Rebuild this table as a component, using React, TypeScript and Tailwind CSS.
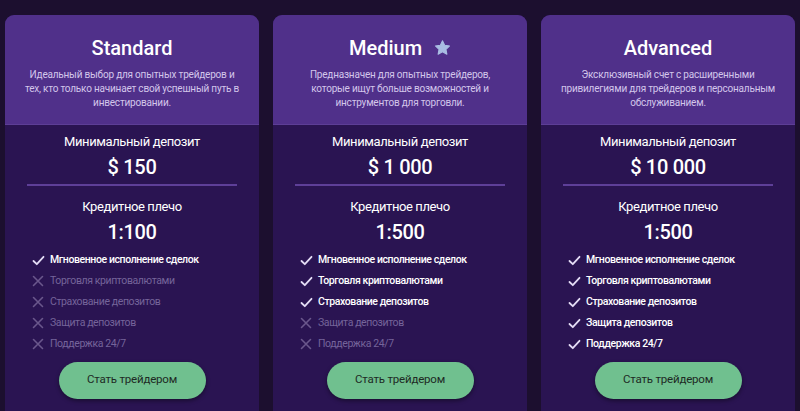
import React from "react";

type Plan = {
  title: string;
  star?: boolean;
  desc: string[];
  deposit: string;
  leverage: string;
  enabled: number;
};

const features = [
  "Мгновенное исполнение сделок",
  "Торговля криптовалютами",
  "Страхование депозитов",
  "Защита депозитов",
  "Поддержка 24/7",
];

const plans: Plan[] = [
  {
    title: "Standard",
    desc: [
      "Идеальный выбор для опытных трейдеров и",
      "тех, кто только начинает свой успешный путь в",
      "инвестировании.",
    ],
    deposit: "$ 150",
    leverage: "1:100",
    enabled: 1,
  },
  {
    title: "Medium",
    star: true,
    desc: [
      "Предназначен для опытных трейдеров,",
      "которые ищут больше возможностей и",
      "инструментов для торговли.",
    ],
    deposit: "$ 1 000",
    leverage: "1:500",
    enabled: 3,
  },
  {
    title: "Advanced",
    desc: [
      "Эксклюзивный счет с расширенными",
      "привилегиями для трейдеров и персональным",
      "обслуживанием.",
    ],
    deposit: "$ 10 000",
    leverage: "1:500",
    enabled: 5,
  },
];

const Check = () => (
  <svg width="13" height="11" viewBox="0 0 13 11" fill="none">
    <path d="M1.5 6 L4.8 9.2 L11.5 1.8" stroke="#e4dcf5" strokeWidth="1.8" strokeLinecap="round" strokeLinejoin="round" />
  </svg>
);

const Cross = () => (
  <svg width="12" height="12" viewBox="0 0 12 12" fill="none">
    <path d="M1.5 1.5 L10.5 10.5 M10.5 1.5 L1.5 10.5" stroke="#6a578c" strokeWidth="1.6" strokeLinecap="round" />
  </svg>
);

const Star = () => (
  <svg width="17" height="16" viewBox="0 0 24 23">
    <path
      d="M12 1.2 L15.1 7.6 L22.2 8.5 L17 13.4 L18.3 20.4 L12 17 L5.7 20.4 L7 13.4 L1.8 8.5 L8.9 7.6 Z"
      fill="#a9bde3"
      stroke="#a9bde3"
      strokeWidth="1.5"
      strokeLinejoin="round"
    />
  </svg>
);

function Card({ p }: { p: Plan }) {
  return (
    <div className="flex-1 flex flex-col rounded-t-[9px] overflow-hidden bg-[#2a1452]">
      <div className="h-[110px] bg-[#50308a] flex flex-col items-center pt-[19px] border-b border-[#5d3e96]">
        <div className="flex items-center gap-[12px] h-[28px]">
          <span className="text-[20px] leading-[28px] font-medium text-white">{p.title}</span>
          {p.star && <Star />}
        </div>
        <div className="mt-[6px] text-center text-[10px] tracking-[-0.2px] leading-[14px] text-[#d3c6ea]">
          {p.desc.map((d, i) => (
            <div key={i}>{d}</div>
          ))}
        </div>
      </div>
      <div className="flex flex-col items-center pt-[7px]">
        <div className="text-[13px] tracking-[-0.4px] leading-[20px] text-white">Минимальный депозит</div>
        <div className="mt-[1px] text-[20px] tracking-[-0.3px] leading-[28px] font-medium text-white">{p.deposit}</div>
        <div className="mt-[3px] h-[1.5px] self-stretch mx-[22px] bg-[#5e3f98]" />
        <div className="mt-[11px] text-[13px] tracking-[-0.4px] leading-[20px] text-white">Кредитное плечо</div>
        <div className="mt-[1px] text-[20px] tracking-[-0.3px] leading-[28px] font-medium text-white">{p.leverage}</div>
      </div>
      <div className="mt-[4px] flex flex-col pl-[27px]">
        {features.map((f, i) => {
          const on = i < p.enabled;
          return (
            <div key={f} className="flex items-center h-[21px]">
              <div className="w-[18px] flex items-center">{on ? <Check /> : <Cross />}</div>
              <span
                className={
                  on
                    ? "text-[10.5px] tracking-[-0.4px] text-white font-medium"
                    : "text-[10.5px] tracking-[-0.4px] text-[#75649a]"
                }
              >
                {f}
              </span>
            </div>
          );
        })}
      </div>
      <div className="mt-[7px] flex justify-center">
        <button className="w-[147px] h-[37px] rounded-full bg-[#70c08f] text-[11.5px] tracking-[-0.2px] text-[#1e2a24] shadow-[0_2px_4px_rgba(0,0,0,0.4)]">
          Стать трейдером
        </button>
      </div>
    </div>
  );
}

export default function App() {
  return (
    <div
      className="w-[800px] h-[411px] overflow-hidden bg-[#1c0f2f] flex gap-[14px] px-[5px] pt-[15px]"
      style={{ fontFamily: 'Roboto, "Noto Sans", sans-serif' }}
    >
      {plans.map((p) => (
        <Card key={p.title} p={p} />
      ))}
    </div>
  );
}
